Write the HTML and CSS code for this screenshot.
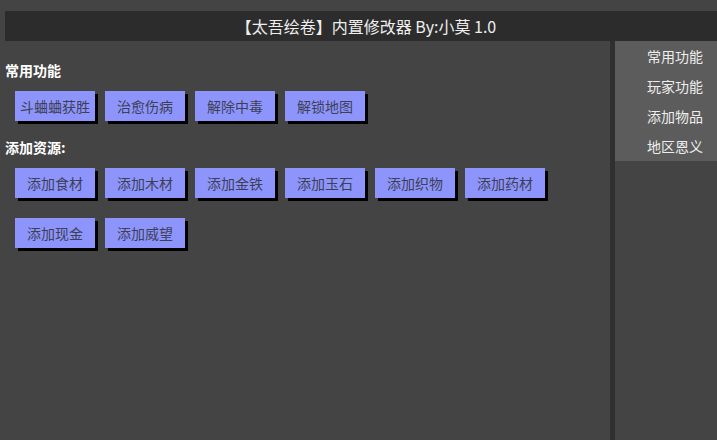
FILE: index.html
```html
<!DOCTYPE html>
<html lang="zh">
<head>
<meta charset="utf-8">
<title>太吾绘卷 内置修改器</title>
<link rel="stylesheet" href="styles.css">
</head>
<body>
<div class="app">
  <div class="titlebar">【太吾绘卷】内置修改器 By:小莫 1.0</div>
  <div class="body">
    <main class="main">
      <h2 class="heading">常用功能</h2>
      <div class="btn-row">
        <button class="btn">斗蛐蛐获胜</button>
        <button class="btn">治愈伤病</button>
        <button class="btn">解除中毒</button>
        <button class="btn">解锁地图</button>
      </div>
      <h2 class="heading heading-second">添加资源:</h2>
      <div class="btn-row">
        <button class="btn">添加食材</button>
        <button class="btn">添加木材</button>
        <button class="btn">添加金铁</button>
        <button class="btn">添加玉石</button>
        <button class="btn">添加织物</button>
        <button class="btn">添加药材</button>
      </div>
      <div class="btn-row btn-row-gap">
        <button class="btn">添加现金</button>
        <button class="btn">添加威望</button>
      </div>
    </main>
    <div class="divider"></div>
    <aside class="sidebar">
      <ul class="menu">
        <li class="menu-item">常用功能</li>
        <li class="menu-item">玩家功能</li>
        <li class="menu-item">添加物品</li>
        <li class="menu-item">地区恩义</li>
      </ul>
    </aside>
  </div>
</div>
</body>
</html>
```

FILE: styles.css
```css
html, body {
  margin: 0;
  padding: 0;
  height: 100%;
  background: #444444;
  overflow: hidden;
}
body {
  font-family: "Noto Sans CJK SC", "Noto Sans", "Liberation Sans", sans-serif;
  color: #eeeeee;
}
.app {
  display: flex;
  flex-direction: column;
  height: 100%;
  padding-top: 11px;
  box-sizing: border-box;
}
.titlebar {
  margin-left: 5px;
  height: 30px;
  background: #2c2c2c;
  color: #eeeeee;
  font-size: 16px;
  line-height: 30px;
  text-align: center;
  padding-left: 10px;
}
.body {
  flex: 1;
  display: flex;
}
.main {
  width: 610px;
  padding-top: 19px;
}
.heading {
  margin: 0 0 11px 5px;
  font-size: 14px;
  line-height: 20px;
  font-weight: bold;
  color: #ffffff;
}
.heading-second {
  margin-top: 16px;
}
.btn-row {
  display: flex;
  gap: 10px;
  margin-left: 15px;
}
.btn-row-gap {
  margin-top: 20px;
}
.btn {
  width: 80px;
  height: 30px;
  padding: 0;
  border: none;
  background: #8d95fd;
  color: #3d3f55;
  font-family: inherit;
  font-size: 14px;
  line-height: 30px;
  box-shadow: 3px 3px 0 #000000;
}
.divider {
  width: 5px;
  background: #303030;
}
.sidebar {
  flex: 1;
}
.menu {
  list-style: none;
  margin: 0;
  padding: 0;
  background: #5c5c5c;
}
.menu-item {
  height: 30px;
  line-height: 30px;
  font-size: 14px;
  text-align: right;
  padding-right: 14px;
  color: #eeeeee;
}
```
